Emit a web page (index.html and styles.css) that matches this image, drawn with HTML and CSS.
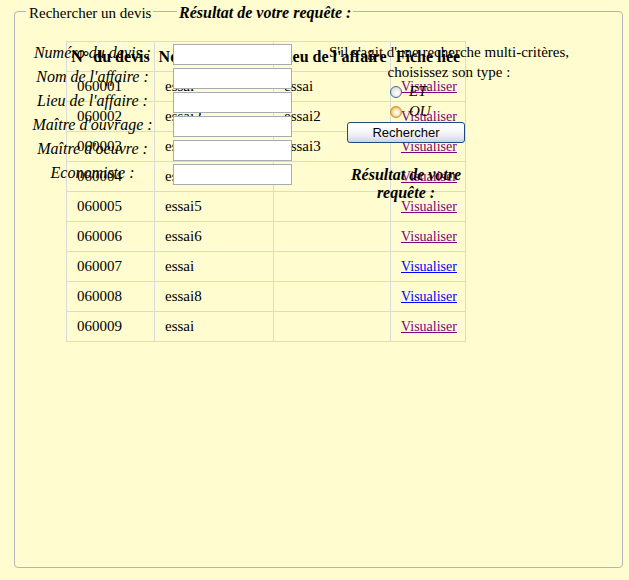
FILE: index.html
```html
<!DOCTYPE html>
<html lang="fr">
<head>
<meta charset="utf-8">
<title>Rechercher un devis</title>
<link rel="stylesheet" href="styles.css">
</head>
<body>
<fieldset class="search">
  <legend class="search-legend">Rechercher un devis</legend>
  <div class="search-body">
    <table class="results">
      <thead>
        <tr><th class="c-num">N° du devis</th><th class="c-nom">Nom de l'affaire</th><th class="c-lieu">Lieu de l'affaire</th><th class="c-fiche">Fiche liée</th></tr>
      </thead>
      <tbody>
        <tr><td>060001</td><td>essai</td><td>essai</td><td><a class="visited" href="#">Visualiser</a></td></tr>
        <tr><td>060002</td><td>essai2</td><td>essai2</td><td><a class="visited" href="#">Visualiser</a></td></tr>
        <tr><td>060003</td><td>essai3</td><td>essai3</td><td><a class="visited" href="#">Visualiser</a></td></tr>
        <tr><td>060004</td><td>essai4</td><td></td><td><a class="visited" href="#">Visualiser</a></td></tr>
        <tr><td>060005</td><td>essai5</td><td></td><td><a class="visited" href="#">Visualiser</a></td></tr>
        <tr><td>060006</td><td>essai6</td><td></td><td><a class="visited" href="#">Visualiser</a></td></tr>
        <tr><td>060007</td><td>essai</td><td></td><td><a href="#">Visualiser</a></td></tr>
        <tr><td>060008</td><td>essai8</td><td></td><td><a href="#">Visualiser</a></td></tr>
        <tr><td>060009</td><td>essai</td><td></td><td><a class="visited" href="#">Visualiser</a></td></tr>
      </tbody>
    </table>

    <div class="result-title result-title-top">Résultat de votre requête :</div>

    <form class="criteria">
      <label class="crit-label" for="f1">Numéro du devis :</label><input class="crit-input" id="f1" type="text">
      <label class="crit-label" for="f2">Nom de l'affaire :</label><input class="crit-input" id="f2" type="text">
      <label class="crit-label" for="f3">Lieu de l'affaire :</label><input class="crit-input" id="f3" type="text">
      <label class="crit-label" for="f4">Maître d'ouvrage :</label><input class="crit-input" id="f4" type="text">
      <label class="crit-label" for="f5">Maître d'oeuvre :</label><input class="crit-input" id="f5" type="text">
      <label class="crit-label" for="f6">Economiste :</label><input class="crit-input" id="f6" type="text">
    </form>

    <p class="multi-note">S'il s'agit d'une recherche multi-critères,<br>choisissez son type :</p>

    <div class="mode">
      <label class="mode-row"><input class="mode-radio" type="radio" name="mode"><span class="mode-text">ET</span></label>
      <label class="mode-row"><input class="mode-radio mode-radio-hot" type="radio" name="mode"><span class="mode-text">OU</span></label>
    </div>

    <button class="search-btn" type="button">Rechercher</button>

    <div class="result-title result-title-side">Résultat de votre requête :</div>
  </div>
</fieldset>
</body>
</html>
```

FILE: styles.css
```css
html, body {
  margin: 0;
  padding: 0;
  background: #fffccf;
}

body {
  font-family: "Liberation Serif", "Times New Roman", serif;
  font-size: 15px;
  color: #000;
}

.search {
  margin: 1px 0 0 14px;
  padding: 0;
  width: 609px;
  box-sizing: border-box;
  border: 1px solid #b4b4bc;
  border-radius: 4px;
}

.search-legend {
  margin-left: 11px;
  padding: 4px 2px 0 3px;
  font-size: 15px;
  line-height: 17px;
}

.search-body {
  position: relative;
  box-sizing: border-box;
  height: 545px;
  padding: 19px 0 0 51px;
}

/* results table */
.results {
  table-layout: fixed;
  width: 400px;
  border-collapse: separate;
  border-spacing: 0;
}

.results th,
.results td {
  box-sizing: border-box;
  height: 30px;
  padding: 0 0 0 10px;
  border-right: 1px solid #dadada;
  border-bottom: 1px solid #dadada;
  vertical-align: middle;
  line-height: 17px;
  text-align: left;
  white-space: nowrap;
  overflow: hidden;
}

.results th:first-child,
.results td:first-child {
  border-left: 1px solid #dadada;
}

.results th {
  height: 31px;
  padding: 0;
  border-top: 1px solid #dadada;
  font-size: 16px;
  font-weight: bold;
  text-align: center;
}

.c-num { width: 89px; }
.c-nom { width: 119px; }
.c-lieu { width: 117px; }
.c-fiche { width: 75px; }

.results a {
  color: #0000ff;
  font-size: 14px;
  text-decoration: underline;
}

.results a.visited {
  color: #800080;
}

/* overlapping headings */
.result-title {
  position: absolute;
  font-size: 16px;
  font-weight: bold;
  font-style: italic;
  line-height: 18px;
}

.result-title-top {
  left: 162px;
  top: -18px;
  padding: 0 2px;
  background: #fffccf;
  white-space: nowrap;
}

.result-title-side {
  left: 332px;
  top: 144px;
  width: 118px;
  text-align: center;
}

/* criteria form */
.criteria {
  position: absolute;
  left: 0;
  top: 22px;
  margin: 0;
  display: grid;
  grid-template-columns: 155px 119px;
  grid-auto-rows: 24px;
  column-gap: 3px;
}

.crit-label {
  align-self: start;
  font-size: 16px;
  font-style: italic;
  line-height: 18px;
  text-align: center;
  white-space: nowrap;
}

.crit-input {
  align-self: start;
  box-sizing: border-box;
  width: 119px;
  height: 21px;
  margin: 0;
  padding: 1px 2px;
  border: 1px solid #a5acb2;
  background: #fff;
  font: 13px "Liberation Sans", Arial, sans-serif;
}

/* multi-criteria note */
.multi-note {
  position: absolute;
  left: 309px;
  top: 20px;
  width: 250px;
  margin: 0;
  font-size: 15px;
  line-height: 20px;
  text-align: center;
  white-space: nowrap;
}

.mode {
  position: absolute;
  left: 375px;
  top: 61px;
  display: grid;
  grid-auto-rows: 20px;
}

.mode-row {
  display: flex;
  align-items: flex-start;
  gap: 7px;
}

.mode-radio {
  appearance: none;
  -webkit-appearance: none;
  width: 12px;
  height: 12px;
  margin: 3px 0 0 0;
  border: 1px solid #3f6a95;
  border-radius: 50%;
  background: radial-gradient(circle at 60% 60%, #ffffff 0, #f0f0ea 35%, #cfd0cc 100%);
  box-sizing: border-box;
}

.mode-radio-hot {
  border-color: #c98d2c;
  background: radial-gradient(circle at 55% 55%, #ffffff 0, #fbf3dc 30%, #f8c869 60%, #e9a23a 100%);
}

.mode-text {
  font-size: 15px;
  font-style: italic;
  line-height: 17px;
}

.search-btn {
  position: absolute;
  left: 332px;
  top: 100px;
  width: 118px;
  height: 21px;
  margin: 0;
  padding: 0;
  border: 1px solid #1f4a80;
  border-radius: 3px;
  background: linear-gradient(to bottom, #ffffff 0%, #f7f7fa 45%, #e4e4ee 80%, #cfd0e2 100%);
  font: 13px "Liberation Sans", Arial, sans-serif;
  color: #000;
}
```
